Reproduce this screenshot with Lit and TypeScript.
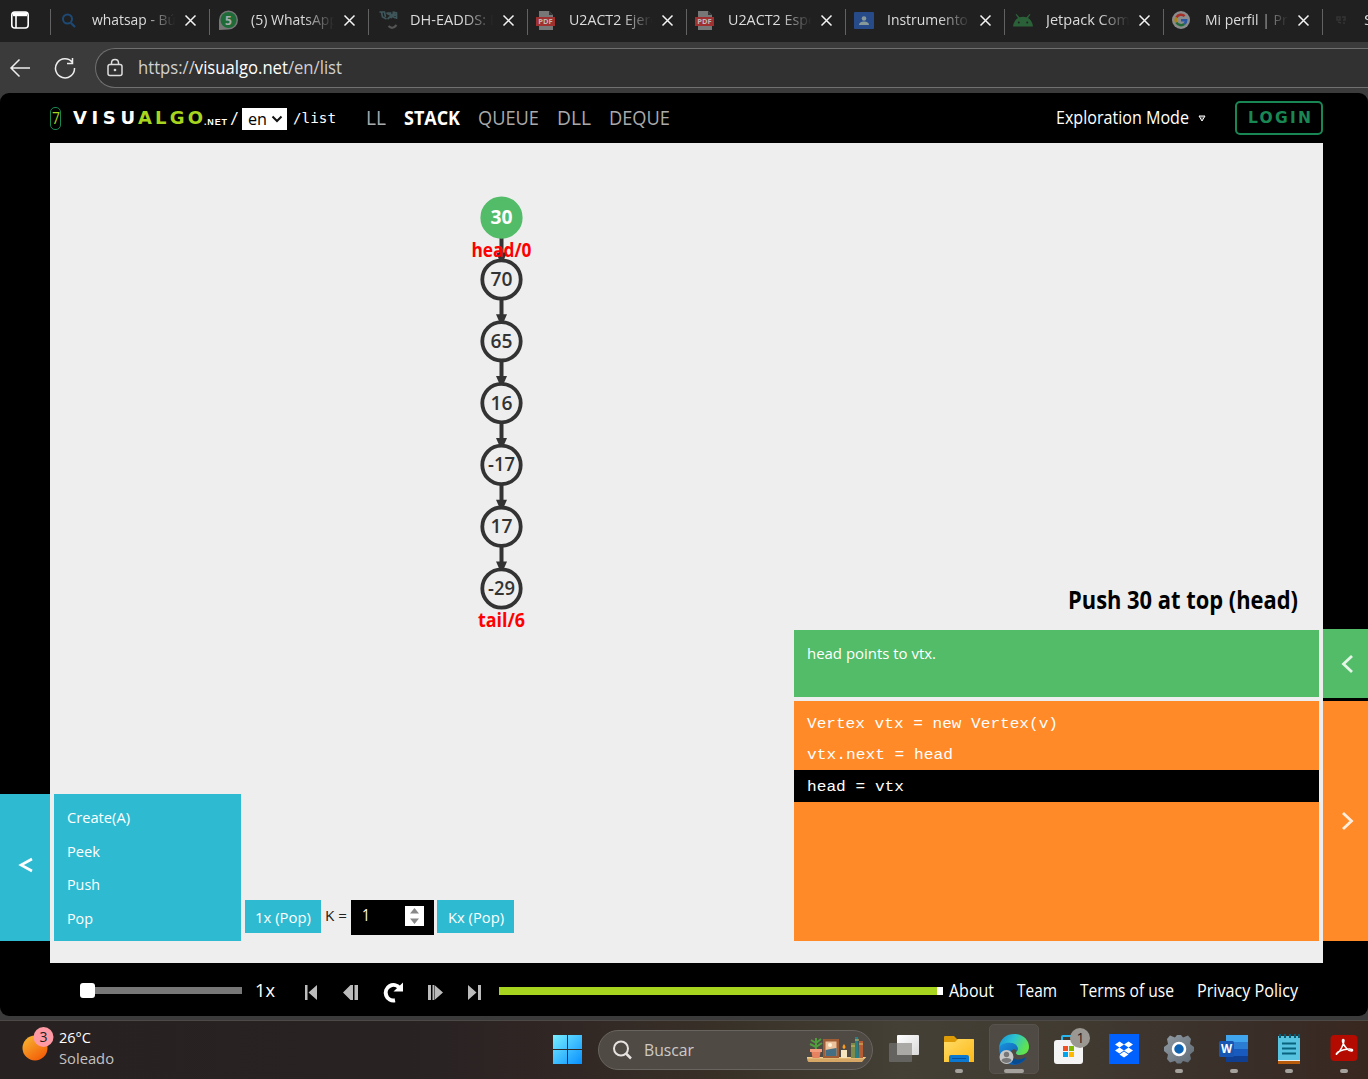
import { LitElement, html, svg, css } from "lit";
import { customElement } from "lit/decorators.js";

/** One line of text set to an exact advance width, centred on its cap height. */
const label = (text: string, width: number, size: number, adjust = "spacingAndGlyphs") => html`<svg
  class="label" width=${width} height=${size * 1.4} font-size=${size}
  ><text x="0" y=${size * 1.06} textLength=${width} lengthAdjust=${adjust}>${text}</text></svg>`;

const tabIcons = {
  search: svg`<circle cx="8.500" cy="9" r="4.500" fill="none" stroke="#1d4a75" stroke-width="2"/><path d="M12 13l4 4" stroke="#1d4a75" stroke-width="2.200"/>`,
  whatsapp: svg`<path d="M1 20V10A9.500 9.500 0 1 1 10.500 19.500Z" fill="#777"/><circle cx="10.500" cy="10" r="8" fill="#1e6b38"/><text x="10.500" y="14.500" font-size="12" font-weight="700" text-anchor="middle" fill="#aaa">5</text>`,
  moodle: svg`<g transform="translate(1.500 0)"><path d="M1 2h5l1 5M3 2l1 5 4 2M8 3h4v5M9 9l8-7M14 2l4 1v6M12 8l5-4M8 3l9 5" fill="none" stroke="#3e555a" stroke-width="1.700"/><path d="M10 16q4 4 8-1" fill="none" stroke="#555" stroke-width="2.200"/></g>`,
  pdf: svg`<path d="M3 1h10l4 4v15H3z" fill="#777"/><path d="M13 1v4h4z" fill="#333"/><path d="M0 7h19v9H0z" fill="#a03030"/><text x="9.500" y="14.300" font-size="7.500" font-weight="700" text-anchor="middle" fill="#bbb">PDF</text>`,
  class: svg`<rect x="0" y="2" width="20" height="17" rx="1" fill="#274a88"/><circle cx="10" cy="8.500" r="2.300" fill="#899"/><path d="M5 15q0-3.500 5-3.500t5 3.500z" fill="#899"/>`,
  android: svg`<path d="M0 16.500Q1 10 5 8L2.500 4.500l1-.6L6.500 7.300q3.500-1.200 7 0L16.500 3.900l1 .6L15 8q4 2 5 8.500z" fill="#2b6138"/><circle cx="5.800" cy="12.500" r="1" fill="#202020"/><circle cx="14.200" cy="12.500" r="1" fill="#202020"/>`,
  google: svg`<circle cx="9" cy="10" r="9" fill="#8c8c8c"/><g fill="none" stroke-width="2.500" transform="translate(-1 0)"><path d="M13.600 6.100A5.300 5.300 0 0 0 5.400 7.500" stroke="#a52f27"/><path d="M5.400 7.300a5.300 5.300 0 0 0 0 5.400" stroke="#a98414"/><path d="M5.400 12.500a5.300 5.300 0 0 0 7.900 1.500" stroke="#216b36"/><path d="M10 10.200h5.200q0 2.400-1.900 3.800" stroke="#2a58a0"/></g>`,
  dim: svg`<path d="M6 7h3v3H6zM11 7h3v3h-2M7 12l3 1M12 13h2" fill="none" stroke="#343434" stroke-width="1.500"/>`,
};

const tabs: [keyof typeof tabIcons, string, number][] = [
  ["search", "whatsap - Bú", 84],
  ["whatsapp", "(5) WhatsApp", 87],
  ["moodle", "DH-EADDS: I", 84],
  ["pdf", "U2ACT2 Ejerc", 88],
  ["pdf", "U2ACT2 Espe", 88],
  ["class", "Instrumento", 81],
  ["android", "Jetpack Com", 84],
  ["google", "Mi perfil | Pro", 91],
  ["dim", "S", 9],
];

const vertices = ["30", "70", "65", "16", "-17", "17", "-29"];

const taskIcons = [
  { name: "view", run: 0, art: svg`<defs><linearGradient id="v" x2="1" y2="1"><stop stop-color="#fff"/><stop offset="1" stop-color="#d9d9d9"/></linearGradient></defs><rect x="0" y="9" width="23" height="19" rx="1" fill="#65635f"/><rect x="8" y="1" width="22" height="20" rx="1" fill="url(#v)"/><path d="M8 9h15v12H8z" fill="#aaa9a6"/>` },
  { name: "files", run: 8, art: svg`<defs><linearGradient id="f" x2="1" y2="1"><stop stop-color="#ffdc68"/><stop offset="1" stop-color="#fdb917"/></linearGradient></defs><path d="M0 3q0-1 1-1h9l3 3h16q1 0 1 1v5H0z" fill="#dd9b08"/><path d="M0 8h11l3-3h15q1 0 1 1v22H0z" fill="url(#f)"/><path d="M5 28v-5q0-2 2-2h16q2 0 2 2v5z" fill="#0b78d1"/><path d="M8 24.500h14" stroke="#064f9c" stroke-width="1"/>` },
  { name: "edge", run: 20, art: svg`<defs><linearGradient id="e1" x2="1" y2=".4"><stop stop-color="#178fd8"/><stop offset=".5" stop-color="#2bc3d2"/><stop offset="1" stop-color="#60e34e"/></linearGradient><linearGradient id="e2" x2="1" y2="1"><stop stop-color="#1a93df"/><stop offset="1" stop-color="#0a479a"/></linearGradient></defs><path d="M0 14C1 4 8 0 15 0c9 0 15 6 15 13 0 5-4 8-9 8-4 0-5-2-3-4 2-3-1-7-6-7-7 0-11 2-12 4z" fill="url(#e1)"/><path d="M0 14c1-3 6-6 12-5 5 0 8 4 6 8-4-4-7 0-5 5 2 5 9 7 15 1-3 5-8 8-13 8C6 30 0 24 0 14z" fill="url(#e2)"/><path d="M13 16c-3 7 4 13 14 7-2 4-7 7-12 7-5-3-7-9-2-14z" fill="#074c91"/><circle cx="7.500" cy="23" r="7" fill="#c8c8c8"/><circle cx="7.500" cy="20.500" r="2.700" fill="#777"/><path d="M2.500 27q0-3 5-3t5 3q-5 4-10 0z" fill="#777"/>` },
  { name: "store", run: 0, art: svg`<path d="M8 7V3q0-1 1-1h12v5" fill="none" stroke="#28b6ef" stroke-width="2"/><rect x="0" y="6" width="29" height="24" rx="3" fill="#f4f4f4"/><path d="M9 12h5v5H9z" fill="#f25022"/><path d="M15 12h5v5h-5z" fill="#7fba00"/><path d="M9 18h5v5H9z" fill="#00a4ef"/><path d="M15 18h5v5h-5z" fill="#ffb900"/><circle cx="26" cy="4" r="10" fill="#9b9893"/><text x="26.500" y="9" font-size="14" text-anchor="middle" fill="#222">1</text>` },
  { name: "dropbox", run: 0, art: svg`<path d="M0 0h30v30H0z" fill="#0061fe"/><path d="M10.500 7.500l4.500 3-4.500 3-4.500-3zM19.500 7.500l4.500 3-4.500 3-4.500-3zM10.500 13.500l4.500 3-4.500 3-4.500-3zM19.500 13.500l4.500 3-4.500 3-4.500-3zM15 17.500l4.500 3-4.500 3-4.500-3z" fill="#fff"/>` },
  { name: "settings", run: 8, art: svg`<defs><linearGradient id="g" x2="1" y2="1"><stop stop-color="#919ba4"/><stop offset="1" stop-color="#606a74"/></linearGradient></defs><path d="M6 1.500l5 2 2-2.500h4l2 2.500 5-2 3 3.500-1 5 4 3v4l-4 3.500 1 4.500-3 3.500-5-1.500-2 2.500h-4l-2-2.500-5 1.500-3-3.500 1-4.500-4-3.500v-4l4-3-1-5z" fill="url(#g)"/><circle cx="15" cy="15" r="6" fill="#0e63b2" stroke="#fff" stroke-width="2.500"/>` },
  { name: "word", run: 8, art: svg`<path d="M7 1h22v8H7z" fill="#41a5ee"/><path d="M7 8h22v7H7z" fill="#2b7cd3"/><path d="M7 15h22v7H7z" fill="#185abd"/><path d="M7 22h22v6H7z" fill="#103f91"/><rect x="0" y="7" width="15" height="16" rx="1.500" fill="#1856b4"/><text x="7.500" y="19" font-size="11.500" font-weight="700" text-anchor="middle" fill="#fff">W</text>` },
  { name: "notepad", run: 8, art: svg`<path d="M4 25h22v5H4z" fill="#b85c0b"/><path d="M4 24h22v3H4z" fill="#eee"/><path d="M4 2h22v24H4z" fill="#58c3e0"/><path d="M6 0v4M11 0v4M16 0v4M21 0v4M25 0v4" stroke="#075b72" stroke-width="2"/><path d="M8 9.500h14M8 14.500h14M8 19.500h14" stroke="#08637d" stroke-width="1.800"/>` },
  { name: "acrobat", run: 8, art: svg`<rect x="1.500" y="1" width="27" height="26" rx="4" fill="#b30b00"/><path d="M8 19.500C11 18 15 10 15 6.500c0-1.500-2-1.500-1.500 1 .7 3.500 6 10.500 9.500 9.500 1.500-1 0-2.500-5-1.800-4 .4-9.500 2.300-10.500 4.300-.4 1.300.2 1 .5 0z" fill="none" stroke="#fff" stroke-width="1.500"/>` },
];

const labelStyles = css`
  .label { display: block; flex: none; overflow: visible; fill: currentColor; }
  svg { display: block; flex: none; }
`;

@customElement("browser-chrome")
class BrowserChrome extends LitElement {
  static styles = [labelStyles, css`
    :host { display: block; }
    .strip { height: 42px; background: #202020; display: flex; overflow: hidden; color: #dcdcdc; box-sizing: border-box; }
    .side { width: 50px; flex: none; padding: 10px 0 0 10px; box-sizing: border-box; }
    .tab { width: 159px; flex: none; display: flex; align-items: center; height: 40px; box-sizing: border-box; }
    .sep { width: 1px; height: 26px; background: #626262; margin-top: 3px; }
    .icon { width: 21px; margin: 0 12px 0 7.5px; }
    .name { width: 85px; overflow: hidden; margin: -2px 7.5px 0 0; -webkit-mask-image: linear-gradient(90deg, #000 62%, transparent 98%); mask-image: linear-gradient(90deg, #000 62%, transparent 98%); }
    .bar { height: 51px; background: #3b3b3b; display: flex; align-items: center; }
    .back { margin: 0 23px 0 9px; }
    .field { margin-left: 19px; flex: 1; height: 40px; box-sizing: border-box; border: 1px solid #707070; border-right: 0; border-radius: 20px 0 0 20px; background: #313131; display: flex; align-items: center; padding-left: 10px; color: #d0d0d0; }
    .lock { margin-right: 14px; }
    .host { fill: #fff; }
  `];
  render() {
    return html`
      <div class="strip">
        <div class="side"><svg width="20" height="20" fill="none" stroke="#fff" stroke-width="1.600"><rect x="1.800" y="2" width="16.400" height="16" rx="3"/><path d="M6 6v12"/><path d="M3 4.200h14" stroke-width="4"/></svg></div>
        ${tabs.map(([icon, name, w]) => html`<div class="tab">
          <div class="sep"></div>
          <svg class="icon" width="21" height="21" font-family="Open Sans, sans-serif">${tabIcons[icon]}</svg>
          <div class="name">${label(name, w, 15)}</div>
          <svg width="13" height="13" stroke="#f4f4f4" stroke-width="1.500"><path d="M1.500 1.500l10 10M11.500 1.500l-10 10"/></svg>
        </div>`)}
      </div>
      <div class="bar">
        <svg class="back" width="22" height="20" fill="none" stroke="#eee" stroke-width="1.500"><path d="M21 10H2M10.500 1.500L2 10l8.500 8.500"/></svg>
        <svg width="22" height="22" fill="none" stroke="#eee" stroke-width="1.500"><path d="M18.500 5.500A9.500 9.500 0 1 0 20.500 11M18.500 1v5.500H13"/></svg>
        <div class="field">
          <svg class="lock" width="18" height="20" fill="none" stroke="#ddd" stroke-width="1.500"><rect x="2" y="6.500" width="14" height="11" rx="2"/><path d="M5.500 6.500V5q0-3.500 3.500-3.500T12.500 5v1.500"/><circle cx="9" cy="12" r=".6" fill="#ddd"/></svg>
          <svg class="label" width="204" height="24" font-size="17.500"><text y="18" textLength="204" lengthAdjust="spacingAndGlyphs">https://<tspan class="host">visualgo.net</tspan>/en/list</text></svg>
        </div>
      </div>`;
  }
}

@customElement("visualgo-page")
class VisualgoPage extends LitElement {
  static styles = [labelStyles, css`
    :host { display: block; background: #3b3b3b; padding-bottom: 4px; }
    .page { background: #000; border-radius: 9px; display: grid; grid-template-rows: 50px 820px 53px; color: #fff; overflow: hidden; }
    .head { display: flex; align-items: center; padding: 0 45px 0 50px; }
    .seven { width: 11px; height: 23px; box-sizing: border-box; border: 1px solid #198754; border-radius: 5px; color: #a7d41e; display: flex; align-items: center; justify-content: center; margin-right: 12px; }
    .brand { display: flex; align-items: center; gap: 3px; font-family: "DejaVu Sans", sans-serif; font-weight: 700; }
    .lime { color: #a7d41e; }
    .net { display: flex; padding-top: 7px; margin: 0 3px 0 1px; font-family: "Liberation Sans", sans-serif; font-weight: 700; }
    .mono { font-family: "DejaVu Sans Mono", monospace; }
    .lang { width: 45px; height: 22px; margin: 2px 6.5px 0 2.5px; background: #fff; color: #000; display: flex; align-items: center; gap: 4px; padding-left: 6px; box-sizing: border-box; }
    .nav { display: flex; align-items: center; gap: 18px; color: #aaa; margin-left: 30px; flex: 1; }
    .nav .on { color: #fff; font-weight: 700; }
    .mode { margin-top: -1px; }
    .down { margin: 0 29px 0 9px; }
    .login { width: 88px; height: 34px; box-sizing: border-box; border: 2px solid #198754; border-radius: 5px; color: #198754; display: flex; align-items: center; justify-content: center; font-family: "DejaVu Sans", sans-serif; font-weight: 700; }
    .main { display: grid; grid-template-columns: 50px 1273px 45px; }
    .left, .right { display: flex; flex-direction: column; justify-content: flex-end; padding-bottom: 22px; }
    .handle { display: flex; align-items: center; justify-content: center; }
    .cyan { background: #2ebbd1; }
    .green { background: #52bc69; }
    .orange { background: #ff8a27; }
    .left .handle { height: 147px; box-sizing: border-box; padding-bottom: 6px; }
    .right { gap: 3px; }
    .right .green { height: 69px; }
    .right .orange { height: 240px; }
    .right svg { margin-left: 2px; }
    .stage { position: relative; background: #eee; display: flex; align-items: flex-end; padding: 0 4px 22px; }
    .diagram { position: absolute; left: 0; top: 0; }
    .menu { width: 187px; height: 147px; box-sizing: border-box; padding: 7px 12.5px; display: grid; grid-template-rows: repeat(4, 33.5px); align-items: center; }
    .actions { display: flex; align-items: flex-start; height: 41px; margin-left: 4px; flex: 1; }
    .act { height: 33px; display: flex; align-items: center; justify-content: center; padding-top: 1px; box-sizing: border-box; }
    .one { width: 76px; }
    .many { width: 77px; }
    .k { color: #222; margin: 6px 4px 0; }
    .count { width: 83px; height: 35px; box-sizing: border-box; background: #000; display: flex; justify-content: space-between; align-items: center; padding: 0 10px 3px 11px; margin-right: 3px; }
    .spin { background: #fff; }
    .info { width: 525px; display: flex; flex-direction: column; gap: 4px; }
    .title { color: #000; font-weight: 700; display: flex; justify-content: flex-end; margin: 0 21px 9px 0; }
    .status { height: 67px; box-sizing: border-box; padding: 13px; }
    .code { height: 240px; box-sizing: border-box; padding-top: 6px; font-family: "Liberation Mono", monospace; }
    .line { height: 31.5px; display: flex; align-items: center; padding-left: 13px; }
    .line.now { background: #000; }
    .foot { display: flex; align-items: center; padding: 0 0 0 80px; height: 54px; }
    .thumb { width: 15px; height: 15px; background: #fff; border-radius: 3px; }
    .track { width: 147px; height: 7px; background: #777; margin-right: 13px; }
    .speed, .links { margin-top: 1px; }
    .controls { margin: 1px 0 0 30px; }
    .done { width: 438px; height: 8px; background: #a7d41e; margin: 2px 0 0 17px; }
    .rest { width: 6px; height: 8px; background: #fff; margin: 2px 6px 0 0; }
    .links { display: flex; gap: 23px; }
  `];
  diagram() {
    const y = (i: number) => 217.7 + i * 61.8;
    return html`<svg class="diagram" width="1273" height="820" viewBox="50 143 1273 820" font-size="19">
      ${vertices.slice(1).map((_, i) => svg`<path d="M501.500 ${y(i) + 20}V${y(i + 1) - 22}" stroke="#333" stroke-width="4"/><path d="M496 ${y(i + 1) - 27}h11l-3.500 8h-4z" fill="#333"/>`)}
      ${vertices.map((v, i) => svg`<circle cx="501.500" cy=${y(i)} r="19.200" fill=${i ? "#eee" : "#52bc69"} stroke=${i ? "#333" : "#52bc69"} stroke-width="3.800"/>
        <text x="501.500" y=${y(i) + 6.5} text-anchor="middle" textLength=${v.length > 2 ? 27 : 22} lengthAdjust="spacingAndGlyphs" font-weight=${i ? 600 : 700} fill=${i ? "#333" : "#fff"}>${v}</text>`)}
      <g fill="#f00" font-weight="700"><text x="471.500" y="257" textLength="60" lengthAdjust="spacingAndGlyphs">head/0</text><text x="478" y="627" textLength="47" lengthAdjust="spacingAndGlyphs">tail/6</text></g>
    </svg>`;
  }
  render() {
    return html`<div class="page">
      <div class="head">
        <div class="seven">${label("7", 8, 16)}</div>
        <div class="brand">${label("VISU", 62, 18, "spacing")}<span class="lime">${label("ALGO", 65, 18, "spacing")}</span></div>
        <div class="net">${label(".NET", 23, 9, "spacing")}</div>
        <div class="mono">${label("/", 9, 15)}</div>
        <div class="lang">${label("en", 19, 16)}<svg width="12" height="8" fill="none" stroke="#111" stroke-width="2"><path d="M1.500 1.500L6 6l4.500-4.500"/></svg></div>
        <div class="mono">${label("/list", 43, 14.5)}</div>
        <div class="nav">${label("LL", 20, 19.5)}<span class="on">${label("STACK", 56, 19.5)}</span>${label("QUEUE", 61, 19.5)}${label("DLL", 34, 19.5)}${label("DEQUE", 61, 19.5)}</div>
        <div class="mode">${label("Exploration Mode", 133, 18)}</div>
        <svg class="down" width="8" height="7"><path d="M1 1h6L4 6z" fill="#555" stroke="#fff"/></svg>
        <div class="login">${label("LOGIN", 63, 15.5, "spacing")}</div>
      </div>
      <div class="main">
        <div class="left"><div class="handle cyan"><svg width="16" height="16" fill="none" stroke="#fff" stroke-width="2.600"><path d="M15 2L4 8l11 6"/></svg></div></div>
        <div class="stage">
          ${this.diagram()}
          <div class="menu cyan">${label("Create(A)", 63, 15)}${label("Peek", 33, 15)}${label("Push", 33, 15)}${label("Pop", 26, 15)}</div>
          <div class="actions">
            <div class="act one cyan">${label("1x (Pop)", 56, 15)}</div>
            <div class="k">${label("K =", 22, 14)}</div>
            <div class="count">${label("1", 8, 15.5)}<svg class="spin" width="19" height="20" fill="#888"><path d="M9.500 2L14 7.500H5zM9.500 18L5 12.500h9z"/></svg></div>
            <div class="act many cyan">${label("Kx (Pop)", 56, 15)}</div>
          </div>
          <div class="info">
            <div class="title">${label("Push 30 at top (head)", 230, 24.5)}</div>
            <div class="status green">${label("head points to vtx.", 129, 15)}</div>
            <div class="code orange">
              <div class="line">${label("Vertex vtx = new Vertex(v)", 251, 14.5)}</div>
              <div class="line">${label("vtx.next = head", 146, 14.5)}</div>
              <div class="line now">${label("head = vtx", 97, 14.5)}</div>
            </div>
          </div>
        </div>
        <div class="right">
          <div class="handle green"><svg width="14" height="20" fill="none" stroke="#fff" stroke-width="2.800" opacity=".85"><path d="M12 2L3.500 10l8.500 8"/></svg></div>
          <div class="handle orange"><svg width="14" height="20" fill="none" stroke="#fff" stroke-width="2.800" opacity=".85"><path d="M3 2l8.500 8L3 18"/></svg></div>
        </div>
      </div>
      <div class="foot">
        <div class="thumb"></div><div class="track"></div>
        <div class="speed">${label("1x", 20, 18)}</div>
        <svg class="controls" width="177" height="24" viewBox="305 979 177 24" fill="#bbb">
          <path d="M305 985h2.500v15H305zM317 985v15l-8.500-7.500zM354.500 985h3.500v15h-3.500zM350.500 985h2.500v15h-2.500l-7.500-7.500zM428 985h3v15h-3zM432.500 985h1.500v15h-1.500zM434.500 985l8.500 7.500-8.500 7.500zM468 985l8.500 7.500-8.500 7.500zM478 985h3v15h-3z"/>
          <path d="M395 1000.300A7.700 7.700 0 1 1 399.500 988" fill="none" stroke="#fff" stroke-width="4"/><path d="M403 982.500v9h-9.500z" fill="#fff"/>
        </svg>
        <div class="done"></div><div class="rest"></div>
        <div class="links">${label("About", 45, 18)}${label("Team", 40, 18)}${label("Terms of use", 94, 18)}${label("Privacy Policy", 101, 18)}</div>
      </div>
    </div>`;
  }
}

@customElement("task-bar")
class TaskBar extends LitElement {
  static styles = [labelStyles, css`
    :host { display: block; }
    .bar { height: 59px; box-sizing: border-box; border-top: 1px solid #4d4947; padding-bottom: 1px; display: flex; align-items: center; overflow: hidden; color: #fff; background: linear-gradient(90deg, #272122 0, #282223 400px, #302624 550px, #393228 740px, #444036 900px, #403a31 1080px, #392d28 1260px, #38271f 1368px); }
    .weather { display: flex; gap: 4px; margin: -8px 0 0 20px; width: 533px; flex: none; }
    .temp { display: flex; flex-direction: column; padding-top: 6px; }
    .soft { color: #c4c1c1; }
    .search { width: 275px; height: 40px; margin: 0 3.5px 0 16px; box-sizing: border-box; border: 1px solid #68645f; border-radius: 20px; background: #504a45; display: flex; align-items: center; padding: 0 6px 0 13px; color: #cdcac7; flex: none; }
    .glass { margin-right: 12px; }
    .shelf { margin-left: auto; }
    .cell { width: 55px; height: 59px; flex: none; display: flex; justify-content: center; padding-top: 4px; box-sizing: border-box; }
    .box { width: 50px; height: 50px; border-radius: 5px; display: flex; flex-direction: column; align-items: center; box-sizing: border-box; padding-top: 9px; gap: 5px; border: 1px solid transparent; }
    .box svg { overflow: visible; }
    .active { background: #4f4a43; border-color: #57524b; }
    .dot { height: 4px; border-radius: 2px; background: #a5a19d; }
  `];
  render() {
    return html`<div class="bar">
      <div class="weather">
        <svg width="35" height="42" font-size="14"><defs><linearGradient id="s" x2=".7" y2="1"><stop stop-color="#f5bc35"/><stop offset="1" stop-color="#f45d07"/></linearGradient></defs><circle cx="15" cy="26" r="12.500" fill="url(#s)"/><circle cx="23.500" cy="15" r="10" fill="#ff99a4"/><text x="23.500" y="20" text-anchor="middle" fill="#222">3</text></svg>
        <div class="temp">${label("26°C", 32, 14.3)}<span class="soft">${label("Soleado", 55, 14.3)}</span></div>
      </div>
      <svg width="29" height="29"><defs><linearGradient id="w" x2="1" y2="1"><stop stop-color="#77eeff"/><stop offset="1" stop-color="#0890ff"/></linearGradient></defs><path d="M0 0h14v14H0zM15 0h14v14H15zM0 15h14v14H0zM15 15h14v14H15z" fill="url(#w)"/></svg>
      <div class="search">
        <svg class="glass" width="20" height="20" fill="none" stroke="#e5e2df" stroke-width="2"><circle cx="9" cy="8.500" r="7"/><path d="M14 13.500l5 5" stroke-width="2.500"/></svg>
        ${label("Buscar", 50, 17)}
        <svg class="shelf" width="60" height="30">
          <path d="M1 22h59l-4 5H3q-2 0-2-5z" fill="#d6a765"/><path d="M1 22h59l-1 1.500H1z" fill="#f0cc8b"/>
          <path d="M5 14h10l-1.500 9h-7z" fill="#e78260"/><path d="M4 14h12v3H4z" fill="#f39b7b"/>
          <path d="M10 14V3M10 8l-5-3M10 12l-6-3M10 8l5-4M10 12l6-4" stroke="#4f9d3c" stroke-width="2" fill="none"/>
          <path d="M17 4h16v19H17z" fill="#a05d35"/><path d="M19.500 6.500h11V21h-11z" fill="#ecc29d"/><path d="M19.500 15l5-1 6-1v8h-11z" fill="#456e83"/><circle cx="24" cy="10" r="2" fill="#fff2d6"/>
          <path d="M35 15h6v8h-6z" fill="#f7e5bf"/><path d="M38 9q3 4 0 5-3-1 0-5z" fill="#ff9d21"/>
          <path d="M45 8h4v15h-4z" fill="#7c8a4b"/><path d="M49 2h3l1 21h-4z" fill="#277f83"/><path d="M53 6h4v17h-4z" fill="#b55d35"/><path d="M45 11h4M49 5h4M53 9h4" stroke="#d9bd63"/>
        </svg>
      </div>
      ${taskIcons.map((t) => html`<div class="cell"><div class="box ${t.name === "edge" ? "active" : ""}">
        <svg width="30" height="30" font-family="Open Sans, sans-serif">${t.art}</svg>
        ${t.run ? html`<div class="dot" style="width:${t.run}px"></div>` : ""}
      </div></div>`)}
    </div>`;
  }
}

@customElement("app-root")
class AppRoot extends LitElement {
  static styles = css`
    :host { display: block; width: 1368px; height: 1079px; overflow: hidden; font-family: "Open Sans", "Noto Sans", sans-serif; }
  `;
  render() {
    return html`<browser-chrome></browser-chrome><visualgo-page></visualgo-page><task-bar></task-bar>`;
  }
}
